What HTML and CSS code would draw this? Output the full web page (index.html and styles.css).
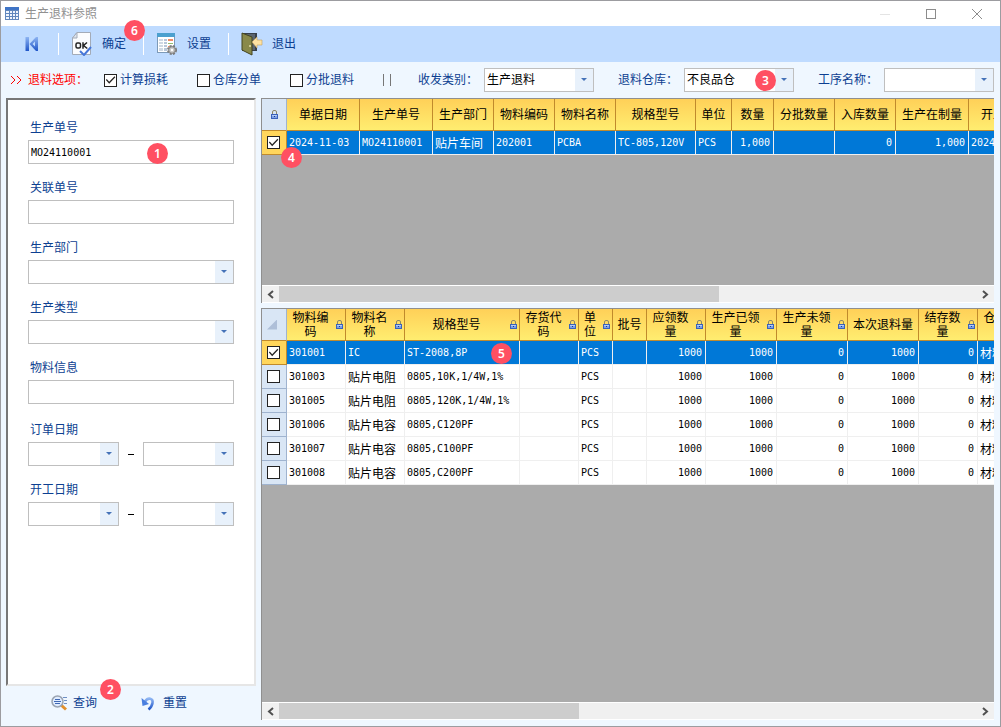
FILE: index.html
```html
<!DOCTYPE html>
<html lang="zh-CN">
<head>
<meta charset="utf-8">
<title>生产退料参照</title>
<link rel="stylesheet" href="styles.css">
</head>
<body>
<svg class="defs" aria-hidden="true">
  <linearGradient id="blue" x1="0" y1="0" x2="0" y2="1"><stop offset="0" stop-color="#8db4f2"/><stop offset="1" stop-color="#1f55c8"/></linearGradient>
  <symbol id="lock" viewBox="0 0 7 9"><path d="M1.500 4V2a1.500 1.500 0 0 1 1.500-1.500h1A1.500 1.500 0 0 1 5.500 2v2" fill="none" stroke="#8b8768"/><path d="M0 4h7v5H0z" fill="#3a62bb"/><path d="M1 5h5v1H1z" fill="#b5cdf6"/><path d="M1 6h5v2H1z" fill="#7ea1e6"/><path d="M3 6h1v1H3z" fill="#173a8c"/></symbol>
</svg>
<div class="window">
  <header class="titlebar">
    <svg class="app-icon" width="14" height="13" viewBox="0 0 14 13"><rect width="14" height="13" fill="#5f86bd"/><path d="M0 0h14v3H0z" fill="#3f74c6"/><path d="M1 4h3v2h-3zM5 4h2v2h-2zM8 4h2v2h-2zM11 4h2v2h-2zM1 7h3v2h-3zM5 7h2v2h-2zM8 7h2v2h-2zM11 7h2v2h-2zM1 10h3v2h-3zM5 10h2v2h-2zM8 10h2v2h-2zM11 10h2v2h-2z" fill="#eef4fd"/></svg>
    <h1 class="title">生产退料参照</h1>
    <button class="win-btn" aria-label="最小化"><svg width="12" height="12" viewBox="0 0 12 12"><path d="M1 6.500h10" stroke="#e4e4e4"/></svg></button>
    <button class="win-btn" aria-label="最大化"><svg width="12" height="12" viewBox="0 0 12 12"><rect x="1.500" y="1.500" width="9" height="9" fill="none" stroke="#8c8c8c"/></svg></button>
    <button class="win-btn" aria-label="关闭"><svg width="12" height="12" viewBox="0 0 12 12"><path d="M1 1l10 10M11 1L1 11" stroke="#8c8c8c"/></svg></button>
  </header>

  <nav class="toolbar">
    <button class="tool first" aria-label="第一条"><svg width="14" height="16" viewBox="0 0 14 16"><path d="M0.500 1h3.500v14h-3.500z" fill="url(#blue)"/><path d="M13 1v14h-2L4.500 8 11 1z" fill="url(#blue)"/><path d="M10 5.500v5L7.500 8z" fill="#bfdbff"/></svg></button>
    <span class="sep"></span>
    <button class="tool">
      <svg width="22" height="24" viewBox="0 0 22 24"><path d="M6 0.500h13.500v22h-18V6z" fill="#fbfcfe" stroke="#a3abb8"/><path d="M1.500 6H6V0.500z" fill="#dfe5ee" stroke="#a3abb8"/><g fill="none" stroke="#222" stroke-width="1.500"><rect x="5" y="11" width="4.500" height="5" rx="1.500"/><path d="M12 10.300v6.400M16 10.500l-3.500 3L16.300 16.500"/></g><path d="M9 19l4 4 7-8" fill="none" stroke="#4676d8" stroke-width="2"/></svg>
      确定<span class="badge b6">6</span></button>
    <span class="sep"></span>
    <button class="tool">
      <svg width="22" height="24" viewBox="0 0 22 24"><rect x="1.500" y="1.500" width="17" height="19" fill="#fff" stroke="#7d9ab8"/><path d="M1 1h18v4H1z" fill="#4ba0cf"/><path d="M3 7h4v12H3z" fill="#cfd9e4"/><path d="M8 7h3v12H8z" fill="#b8c7da"/><path d="M12 7h5v3h-5zM12 14h4v2h-4z" fill="#ef8b68"/><path d="M12 11h5v2h-5z" fill="#94bd71"/><path d="M2 9.500h16M2 12.500h16M2 15.500h16" stroke="#fff"/><circle cx="16" cy="18" r="4" fill="#b7b7b7" stroke="#777" stroke-width="2" stroke-dasharray="2 1.200"/><circle cx="16" cy="18" r="3.300" fill="#c8c8c8" stroke="#888"/><circle cx="16" cy="18" r="1.200" fill="#fff"/></svg>
      设置</button>
    <span class="sep"></span>
    <button class="tool">
      <svg width="22" height="24" viewBox="0 0 22 24"><path d="M1 1h15v18H1z" fill="#38404a"/><path d="M3 2h11v16H3z" fill="#5b6570"/><path d="M1 1l10 4v18L1 18z" fill="#89894a" stroke="#44441f"/><circle cx="9" cy="14" r="1" fill="#e6dfaa"/><path d="M11 10l5-5v3h5v5h-5v3z" fill="#ffe2a2" stroke="#c4a15c" stroke-width=".6"/></svg>
      退出</button>
  </nav>

  <section class="options">
    <div class="checks">
      <span class="caption"><svg class="arrows" width="12" height="10" viewBox="0 0 12 10"><path d="M1 1l4 4-4 4M7 1l4 4-4 4" fill="none" stroke="#f00"/></svg>退料选项：</span>
      <label class="check"><input type="checkbox" checked>计算损耗</label>
      <label class="check"><input type="checkbox">仓库分单</label>
      <label class="check"><input type="checkbox">分批退料</label>
      <span class="bars"></span>
    </div>
    <div class="pick"><label for="kind">收发类别：</label><span class="combo"><select id="kind"><option>生产退料</option></select></span></div>
    <div class="pick"><label for="store">退料仓库：</label><span class="combo"><select id="store"><option>不良品仓</option></select><span class="badge b3">3</span></span></div>
    <div class="pick"><label for="step">工序名称：</label><span class="combo"><select id="step"><option></option></select></span></div>
  </section>

  <main class="body">
    <aside class="side">
      <form class="panel">
        <div class="field"><label for="mo">生产单号</label><span class="holder"><input id="mo" class="text mono" value="MO24110001"><span class="badge b1">1</span></span></div>
        <div class="field"><label for="rel">关联单号</label><input id="rel" class="text"></div>
        <div class="field"><label for="dept">生产部门</label><span class="combo"><select id="dept"><option></option></select></span></div>
        <div class="field"><label for="type">生产类型</label><span class="combo"><select id="type"><option></option></select></span></div>
        <div class="field"><label for="mat">物料信息</label><input id="mat" class="text"></div>
        <div class="field dates"><label for="od1">订单日期</label><div class="range"><span class="combo"><select id="od1"><option></option></select></span><i class="dash"></i><span class="combo"><select aria-label="订单日期至"><option></option></select></span></div></div>
        <div class="field"><label for="sd1">开工日期</label><div class="range"><span class="combo"><select id="sd1"><option></option></select></span><i class="dash"></i><span class="combo"><select aria-label="开工日期至"><option></option></select></span></div></div>
      </form>
      <div class="actions">
        <button class="action">
          <svg width="16" height="16" viewBox="0 0 16 16"><path d="M12 2.500h4M13 5.500h3M13 8.500h3" stroke="#6d8fc4"/><path d="M10 10l5 4.500" stroke="#e2902c" stroke-width="3"/><circle cx="6.500" cy="6.500" r="5.500" fill="#dfecff" stroke="#9aa4b2" stroke-width="1.500"/><path d="M4 4.500h5M3 6.500h7M4 8.500h5" stroke="#3f68b4"/></svg>
          查询<span class="badge b2">2</span></button>
        <button class="action reset">
          <svg width="14" height="16" viewBox="0 0 14 16"><path d="M4 6.500C7 2 12.500 3 11.500 8c-.5 3-2 5-4 6.500" fill="none" stroke="url(#blue)" stroke-width="2.600"/><path d="M0.500 3l1 8 6.500-2z" fill="#4a7fe0"/></svg>
          重置</button>
      </div>
    </aside>

    <div class="grids">
      <section class="grid orders">
        <div class="view">
          <table>
            <colgroup><col class="w25"><col class="w73"><col class="w73"><col class="w61"><col class="w61"><col class="w61"><col class="w80"><col class="w36"><col class="w42"><col class="w61"><col class="w61"><col class="w73"><col class="w73"></colgroup>
            <thead><tr><th class="corner"><svg class="lock"><use href="#lock"/></svg></th><th>单据日期</th><th>生产单号</th><th>生产部门</th><th>物料编码</th><th>物料名称</th><th>规格型号</th><th>单位</th><th>数量</th><th>分批数量</th><th>入库数量</th><th>生产在制量</th><th>开工日期</th></tr></thead>
            <tbody><tr class="sel"><td class="mark"><input type="checkbox" checked aria-label="选择单据"><span class="badge b4">4</span></td><td>2024-11-03</td><td>MO24110001</td><td class="zh">贴片车间</td><td>202001</td><td>PCBA</td><td>TC-805,120V</td><td>PCS</td><td class="num">1,000</td><td></td><td class="num">0</td><td class="num">1,000</td><td>2024-11-03</td></tr></tbody>
          </table>
        </div>
        <div class="scroll"><button aria-label="向左"><svg width="7" height="9" viewBox="0 0 7 9"><path d="M6 1L2 4.500 6 8" fill="none" stroke="#505050" stroke-width="2"/></svg></button><div class="track"><div class="thumb" style="width:63%"></div></div><button aria-label="向右"><svg width="7" height="9" viewBox="0 0 7 9"><path d="M1 1l4 3.500L1 8" fill="none" stroke="#505050" stroke-width="2"/></svg></button></div>
      </section>

      <section class="grid items">
        <div class="view">
          <table>
            <colgroup><col class="w25"><col class="w59"><col class="w59"><col class="w115"><col class="w59"><col class="w34"><col class="w34"><col class="w59"><col class="w71"><col class="w71"><col class="w71"><col class="w59"><col class="w59"></colgroup>
            <thead><tr><th class="corner"><i class="tri"></i></th>
              <th><div class="head"><span>物料编码</span><svg class="lock"><use href="#lock"/></svg></div></th>
              <th><div class="head"><span>物料名称</span><svg class="lock"><use href="#lock"/></svg></div></th>
              <th><div class="head"><span>规格型号</span><svg class="lock"><use href="#lock"/></svg></div></th>
              <th><div class="head"><span>存货代码</span><svg class="lock"><use href="#lock"/></svg></div></th>
              <th><div class="head"><span>单位</span><svg class="lock"><use href="#lock"/></svg></div></th>
              <th>批号</th>
              <th><div class="head"><span>应领数量</span><svg class="lock"><use href="#lock"/></svg></div></th>
              <th><div class="head"><span>生产已领量</span><svg class="lock"><use href="#lock"/></svg></div></th>
              <th><div class="head"><span>生产未领量</span><svg class="lock"><use href="#lock"/></svg></div></th>
              <th>本次退料量</th>
              <th><div class="head"><span>结存数量</span><svg class="lock"><use href="#lock"/></svg></div></th>
              <th><div class="head"><span>仓库名称</span><svg class="lock"><use href="#lock"/></svg></div></th></tr></thead>
            <tbody>
              <tr class="sel"><td class="mark"><input type="checkbox" checked aria-label="选择 301001"></td><td>301001</td><td>IC</td><td class="spec">ST-2008,8P<span class="badge b5">5</span></td><td></td><td>PCS</td><td></td><td class="num">1000</td><td class="num">1000</td><td class="num">0</td><td class="num">1000</td><td class="num">0</td><td class="zh">材料仓</td></tr>
              <tr><td class="mark"><input type="checkbox" aria-label="选择 301003"></td><td>301003</td><td class="zh">贴片电阻</td><td>0805,10K,1/4W,1%</td><td></td><td>PCS</td><td></td><td class="num">1000</td><td class="num">1000</td><td class="num">0</td><td class="num">1000</td><td class="num">0</td><td class="zh">材料仓</td></tr>
              <tr><td class="mark"><input type="checkbox" aria-label="选择 301005"></td><td>301005</td><td class="zh">贴片电阻</td><td>0805,120K,1/4W,1%</td><td></td><td>PCS</td><td></td><td class="num">1000</td><td class="num">1000</td><td class="num">0</td><td class="num">1000</td><td class="num">0</td><td class="zh">材料仓</td></tr>
              <tr><td class="mark"><input type="checkbox" aria-label="选择 301006"></td><td>301006</td><td class="zh">贴片电容</td><td>0805,C120PF</td><td></td><td>PCS</td><td></td><td class="num">1000</td><td class="num">1000</td><td class="num">0</td><td class="num">1000</td><td class="num">0</td><td class="zh">材料仓</td></tr>
              <tr><td class="mark"><input type="checkbox" aria-label="选择 301007"></td><td>301007</td><td class="zh">贴片电容</td><td>0805,C100PF</td><td></td><td>PCS</td><td></td><td class="num">1000</td><td class="num">1000</td><td class="num">0</td><td class="num">1000</td><td class="num">0</td><td class="zh">材料仓</td></tr>
              <tr><td class="mark"><input type="checkbox" aria-label="选择 301008"></td><td>301008</td><td class="zh">贴片电容</td><td>0805,C200PF</td><td></td><td>PCS</td><td></td><td class="num">1000</td><td class="num">1000</td><td class="num">0</td><td class="num">1000</td><td class="num">0</td><td class="zh">材料仓</td></tr>
            </tbody>
          </table>
        </div>
        <div class="scroll"><button aria-label="向左"><svg width="7" height="9" viewBox="0 0 7 9"><path d="M6 1L2 4.500 6 8" fill="none" stroke="#505050" stroke-width="2"/></svg></button><div class="track"><div class="thumb" style="width:43%"></div></div><button aria-label="向右"><svg width="7" height="9" viewBox="0 0 7 9"><path d="M1 1l4 3.500L1 8" fill="none" stroke="#505050" stroke-width="2"/></svg></button></div>
      </section>
    </div>
  </main>
</div>
</body>
</html>
```
FILE: styles.css
```css
* { box-sizing: border-box; }

body {
  margin: 0;
  font: 12px/16px "Liberation Sans", "Noto Sans CJK SC", sans-serif;
  color: #000;
}

button {
  border: 0;
  padding: 0;
  background: none;
  font: inherit;
  color: inherit;
}

.defs { position: absolute; width: 0; height: 0; }

.window {
  display: flex;
  flex-direction: column;
  min-height: 100vh;
  border: 1px solid #9c9ca0;
  background: #eff7ff;
}

/* Title bar */
.titlebar {
  display: flex;
  align-items: center;
  height: 25px;
  padding-left: 4px;
  background: #fff;
}
.title {
  flex: 1;
  margin: 0 0 0 6px;
  font-size: 12px;
  font-weight: 400;
  color: #909090;
}
.win-btn {
  display: flex;
  align-items: center;
  justify-content: center;
  width: 46px;
  height: 25px;
}

/* Toolbar */
.toolbar {
  display: flex;
  align-items: center;
  height: 36px;
  padding-left: 24px;
  background: #bfdbff;
  color: #0d3f91;
}
.tool {
  position: relative;
  display: flex;
  align-items: center;
  gap: 9px;
  margin: 0 17px 0 12px;
}
.tool.first { margin: 0 19px 0 0; }
.sep {
  width: 1px;
  height: 22px;
  background: #fff;
}

/* Option row */
.options {
  display: flex;
  align-items: center;
  gap: 24px;
  height: 36px;
  padding: 0 6px 0 9px;
  color: #0d3f91;
  white-space: nowrap;
}
.checks {
  display: flex;
  flex: 1;
  align-items: center;
  gap: 29px;
}
.caption {
  display: flex;
  align-items: center;
  gap: 6px;
  margin-right: -13px;
  color: #f00;
}
.check { display: flex; align-items: center; gap: 3px; }
.bars {
  width: 8px;
  height: 12px;
  border: solid #777;
  border-width: 0 1px;
}
.pick { display: flex; align-items: center; }
.pick label { width: 66px; }
.pick .combo { width: 110px; }

/* Form controls */
input[type="checkbox"] {
  display: block;
  appearance: none;
  width: 13px;
  height: 13px;
  margin: 0;
  border: 1px solid #222;
  background: #fff;
}
input[type="checkbox"]:checked::after {
  content: "";
  display: block;
  width: 11px;
  height: 11px;
  background: #222;
  clip-path: polygon(8% 50%, 16% 42%, 38% 66%, 86% 16%, 94% 25%, 38% 84%);
}

.text,
.combo select {
  display: block;
  width: 100%;
  height: 24px;
  margin: 0;
  padding: 0 2px;
  border: 1px solid #bfbfbf;
  border-radius: 0;
  outline: 0;
  background: #fff;
  font: inherit;
  color: #000;
  appearance: none;
}
.text.mono { font: 10px "DejaVu Sans Mono", monospace; }

.combo, .holder {
  position: relative;
  display: block;
}
.combo::before,
.combo::after {
  content: "";
  position: absolute;
  pointer-events: none;
}
.combo::before {
  top: 1px;
  right: 1px;
  bottom: 1px;
  width: 18px;
  background: #e8f1fb;
}
.combo::after {
  top: 10px;
  right: 7px;
  border: solid transparent;
  border-width: 3px 3px 0;
  border-top-color: #4472b8;
}

/* Body */
.body {
  display: flex;
  flex: 1;
  gap: 5px;
  padding: 0 6px 6px 5px;
}
.side {
  display: flex;
  flex: none;
  flex-direction: column;
  width: 250px;
}
.panel {
  display: flex;
  flex: 1;
  flex-direction: column;
  gap: 12px;
  padding: 16px 20px;
  border: 2px solid;
  border-color: #777 #e6e6e6 #e6e6e6 #777;
  background: #fff;
}
.field label {
  display: block;
  padding-left: 2px;
  line-height: 24px;
  color: #0d3f91;
}
.dates { margin-top: 2px; }
.range { display: flex; align-items: center; }
.range .combo { flex: 1; }
.dash {
  width: 6px;
  height: 1px;
  margin: 0 9px;
  background: #000;
}
.actions {
  display: flex;
  gap: 44px;
  height: 34px;
  padding-left: 45px;
  color: #0d3f91;
}
.action {
  position: relative;
  display: flex;
  align-items: center;
  gap: 6px;
}
.action.reset { gap: 8px; }

/* Data grids */
.grids {
  display: flex;
  flex: 1;
  flex-direction: column;
  gap: 5px;
  min-width: 0;
}
.grid {
  display: flex;
  flex-direction: column;
  border: solid #8f8f8f;
  border-width: 1px 0 0 1px;
}
.orders { height: 205px; }
.items { flex: 1; }
.view {
  flex: 1;
  overflow: hidden;
  background: #ababab;
}

table {
  width: 0;
  table-layout: fixed;
  border-collapse: separate;
  border-spacing: 0;
}
.w25 { width: 25px; }
.w34 { width: 34px; }
.w36 { width: 36px; }
.w42 { width: 42px; }
.w59 { width: 59px; }
.w61 { width: 61px; }
.w71 { width: 71px; }
.w73 { width: 73px; }
.w80 { width: 80px; }
.w115 { width: 115px; }

th {
  height: 32px;
  padding: 0;
  border: solid #c08a2c;
  border-width: 0 1px 1px 0;
  background: linear-gradient(#ffd058, #ffed70);
  font-weight: 400;
  line-height: 14px;
  white-space: nowrap;
}
.corner {
  border-color: #c08a2c;
  border-right-color: #9fb3cf;
  background: #d9e6f5;
}
.corner .lock { margin: 0 auto; }
.lock {
  display: block;
  flex: none;
  width: 7px;
  height: 9px;
}
.tri {
  display: block;
  width: 10px;
  height: 10px;
  margin: 0 0 0 5px;
  background: #aebfd8;
  clip-path: polygon(100% 0, 100% 100%, 0 100%);
}
.head {
  display: flex;
  align-items: center;
  padding-right: 2px;
}
.head span {
  flex: 1;
  margin-right: 2px;
  white-space: normal;
}

td {
  height: 24px;
  padding: 0 2px;
  border: solid #efefef;
  border-width: 0 1px 1px 0;
  background: #fff;
  font: 10px/16px "DejaVu Sans Mono", monospace;
  white-space: nowrap;
}
td.zh { font: 12px/16px "Noto Sans CJK SC", sans-serif; }
td.num { padding-right: 3px; text-align: right; }
td.mark {
  position: relative;
  padding: 0 0 0 5px;
  border-color: #9fb3cf;
  background: #d9e6f5;
}
.sel td { background: #0078d7; color: #fff; }
.sel td.mark {
  border-color: #c08a2c;
  background: #ffd65c;
}
td.spec { position: relative; }

/* Scroll bars */
.scroll {
  display: flex;
  height: 18px;
  border: solid #fff;
  border-width: 1px 0;
  background: #f0f0f0;
}
.scroll button {
  display: flex;
  align-items: center;
  justify-content: center;
  width: 17px;
}
.track { flex: 1; }
.thumb { height: 16px; background: #cdcdcd; }

/* Step badges */
.badge {
  position: absolute;
  z-index: 1;
  width: 21px;
  height: 21px;
  border-radius: 50%;
  background: #ff5062;
  font: 600 12px/21px "Noto Sans", sans-serif;
  color: #fff;
  text-align: center;
}
.b1 { top: 3px; left: 119px; }
.b2 { top: -7px; left: 49px; }
.b3 { top: 2px; right: 18px; }
.b4 { top: 16px; left: 19px; }
.b5 { top: 2px; left: 86px; }
.b6 { top: -12px; left: 53px; }
```
